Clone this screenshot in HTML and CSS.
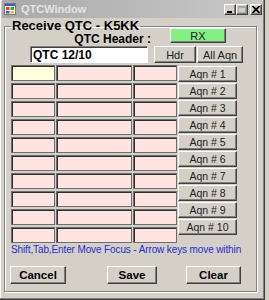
FILE: index.html
```html
<!DOCTYPE html>
<html lang="en">
<head>
  <meta charset="UTF-8" />
  <title>QTCWindow</title>
  <link rel="stylesheet" href="styles.css">
</head>
<body>
  <div class="window">
    <div class="titlebar">
      <svg class="app-icon" width="12" height="12" viewBox="0 0 12 12">
        <rect x="0.5" y="0.5" width="11" height="11" fill="#f4f4f4" stroke="#7a7a7a"/>
        <rect x="1" y="1" width="10" height="2" fill="#3b5fb8"/>
        <rect x="2" y="4" width="3.5" height="3" fill="#e24a2a"/>
        <rect x="6.5" y="4" width="3.5" height="3" fill="#3da83d"/>
        <rect x="2" y="8" width="3.5" height="2.5" fill="#2a6ad8"/>
        <rect x="6.5" y="8" width="3.5" height="2.5" fill="#f0c020"/>
      </svg>
      <span class="title">QTCWindow</span>
      <div class="controls">
        <span class="ctl">
          <svg width="8" height="7" viewBox="0 0 8 7"><rect x="1" y="5" width="5" height="2" fill="#000"/></svg>
        </span>
        <span class="ctl">
          <svg width="8" height="7" viewBox="0 0 8 7"><rect x="0.5" y="0.5" width="7" height="6" fill="none" stroke="#a8a8a8"/><rect x="0" y="0" width="8" height="2" fill="#a8a8a8"/></svg>
        </span>
        <span class="ctl close">
          <svg width="8" height="7" viewBox="0 0 8 7"><path d="M0.5 0 L7.5 7 M7.5 0 L0.5 7" stroke="#000" stroke-width="1.8"/></svg>
        </span>
      </div>
    </div>

    <fieldset class="group">
      <legend>Receive QTC - K5KK</legend>

      <div class="header">
        <label class="hdr-label" for="qtc-header">QTC Header :</label>
        <button class="btn rx">RX</button>
        <input class="hdr-input" id="qtc-header" value="QTC 12/10">
        <button class="btn hdr">Hdr</button>
        <button class="btn">All Aqn</button>
      </div>

      <div class="table">
        <div class="cells">
          <input class="cell current"><input class="cell"><input class="cell">
          <input class="cell"><input class="cell"><input class="cell">
          <input class="cell"><input class="cell"><input class="cell">
          <input class="cell"><input class="cell"><input class="cell">
          <input class="cell"><input class="cell"><input class="cell">
          <input class="cell"><input class="cell"><input class="cell">
          <input class="cell"><input class="cell"><input class="cell">
          <input class="cell"><input class="cell"><input class="cell">
          <input class="cell"><input class="cell"><input class="cell">
          <input class="cell"><input class="cell"><input class="cell">
        </div>
        <div class="aqn">
          <button class="btn">Aqn # 1</button>
          <button class="btn">Aqn # 2</button>
          <button class="btn">Aqn # 3</button>
          <button class="btn">Aqn # 4</button>
          <button class="btn">Aqn # 5</button>
          <button class="btn">Aqn # 6</button>
          <button class="btn">Aqn # 7</button>
          <button class="btn">Aqn # 8</button>
          <button class="btn">Aqn # 9</button>
          <button class="btn">Aqn # 10</button>
        </div>
      </div>

      <p class="hint">Shift,Tab,Enter Move Focus - Arrow keys move within</p>

      <div class="actions">
        <button class="btn big cancel">Cancel</button>
        <button class="btn big save">Save</button>
        <button class="btn big clear">Clear</button>
      </div>
    </fieldset>
  </div>
</body>
</html>
```

FILE: styles.css
```css
* { margin: 0; padding: 0; box-sizing: border-box; }
body {
  background: #d4d0c8;
  font-family: 'Liberation Sans', Arial, sans-serif;
  font-size: 11px;
  color: #000;
}
.window {
  width: 265px;
  height: 300px;
  background: #d4d0c8;
  border-right: 1px solid #404040;
  border-bottom: 1px solid #404040;
  box-shadow: inset -1px -1px #808080, inset 1px 1px #fff;
  padding-left: 4px;
}

/* title bar */
.titlebar {
  display: flex;
  align-items: center;
  height: 18px;
  margin-left: -2px;
  margin-right: 2px;
  padding-left: 2px;
  background: linear-gradient(to right, #a9a9a9, #c9c9c9);
}
.app-icon { margin-right: 5px; }
.title {
  font-weight: bold;
  font-size: 11px;
  color: #e4e4e4;
}
.controls {
  display: flex;
  margin-left: auto;
}
.ctl {
  display: flex;
  align-items: center;
  justify-content: center;
  width: 12px;
  height: 11px;
  background: #d4d0c8;
  border: 1px solid;
  border-color: #fff #404040 #404040 #fff;
  box-shadow: inset -1px -1px #808080;
}
.ctl.close { margin-left: 2px; }
.ctl svg { display: block; }

/* group box */
.group {
  width: 253px;
  margin-top: 1px;
  padding: 0 6px 7px 6px;
  border: 1px solid #808080;
  box-shadow: inset 1px 1px #fff, 1px 1px #fff;
  min-width: 0;
}
.group legend {
  padding: 0 1px;
  font-weight: bold;
  font-size: 13px;
  line-height: 14px;
}

.btn {
  font-family: 'Liberation Sans', Arial, sans-serif;
  font-size: 11px;
  color: #222;
  background: #d4d0c8;
  border: 1px solid;
  border-color: #fff #404040 #404040 #fff;
  box-shadow: inset -1px -1px #808080;
  height: 17px;
  padding: 0;
}

.header {
  display: grid;
  grid-template-columns: 118px 49px 46px;
  grid-template-rows: 17px 17px;
  row-gap: 1px;
  padding-left: 19px;
  margin-top: -5px;
}
.hdr-label {
  grid-column: 1;
  justify-self: end;
  align-self: end;
  margin-right: -3px;
  margin-bottom: -1px;
  font-weight: bold;
  font-size: 12px;
  line-height: 14px;
}
.btn.rx {
  grid-column: 2 / 4;
  justify-self: start;
  align-self: start;
  margin-left: 22px;
  width: 56px;
  height: 15px;
  background: #84f084;
}
.hdr-input {
  grid-column: 1;
  height: 17px;
  padding: 0 2px;
  font-family: 'Liberation Sans', Arial, sans-serif;
  font-weight: bold;
  font-size: 12px;
  background: #fff;
  border: 1px solid;
  border-color: #808080 #fff #fff #808080;
  box-shadow: inset 1px 1px #404040;
  outline: none;
}
.btn.hdr { width: 42px; justify-self: end; margin-right: 1px; }

/* qtc grid */
.table {
  display: flex;
  gap: 1px;
  margin-top: 2px;
}
.cells {
  display: grid;
  grid-template-columns: 44px 76px 44px;
  grid-auto-rows: 16px;
  column-gap: 1px;
  row-gap: 2px;
}
.cell {
  width: 100%;
  height: 16px;
  background: #ffe4e1;
  border: 1px solid #6e6e6e;
  box-shadow: inset 1px 1px #2e2e2e;
  outline: none;
}
.cell.current { background: #ffffe0; }
.aqn {
  display: flex;
  flex-direction: column;
  gap: 1px;
  margin-top: 1px;
}
.aqn .btn { width: 59px; height: 16px; font-size: 10.5px; }

.hint {
  margin-top: 1px;
  color: #2b2bd0;
  font-size: 10px;
  letter-spacing: -0.12px;
  line-height: 12px;
  white-space: nowrap;
}

.actions {
  display: flex;
  margin-top: 10px;
}
.btn.big {
  height: 18px;
  font-weight: bold;
  font-size: 11.5px;
  color: #000;
}
.btn.cancel { width: 56px; margin-left: -1px; }
.btn.save { width: 50px; margin-left: 41px; }
.btn.clear { width: 55px; margin-left: 29px; }
```
